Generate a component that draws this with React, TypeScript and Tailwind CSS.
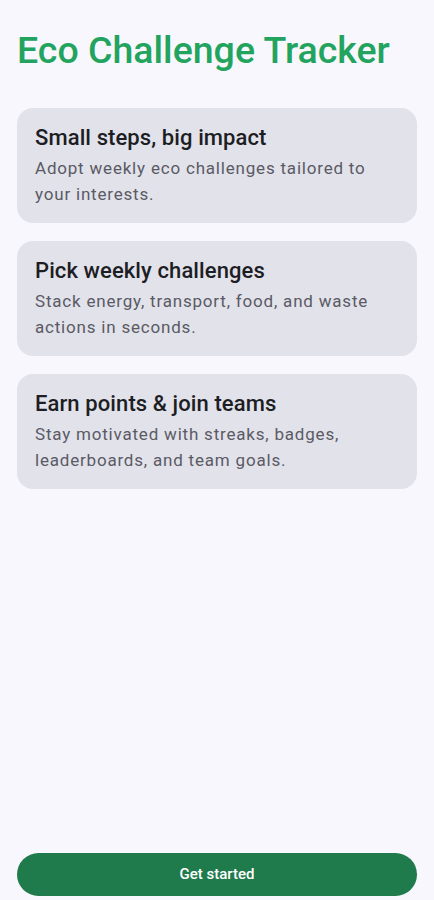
const cards = [
  {
    title: 'Small steps, big impact',
    body: 'Adopt weekly eco challenges tailored to your interests.',
  },
  {
    title: 'Pick weekly challenges',
    body: 'Stack energy, transport, food, and waste actions in seconds.',
  },
  {
    title: 'Earn points & join teams',
    body: 'Stay motivated with streaks, badges, leaderboards, and team goals.',
  },
]

export default function App() {
  return (
    <div className="flex min-h-screen flex-col bg-[#f8f7fd] px-[17px] font-['Roboto',sans-serif]">
      <h1 className="mt-[27px] text-[37.5px] leading-[46px] font-medium text-[#22a45e]">Eco Challenge Tracker</h1>
      <div className="mt-[35px] flex flex-col gap-[18px]">
        {cards.map((card) => (
          <div key={card.title} className="rounded-[16px] bg-[#e2e2eb] px-[18px] pt-[15px] pb-[16px]">
            <h2 className="text-[22px] leading-[30px] font-medium tracking-[0.1px] text-[#1d1d24]">{card.title}</h2>
            <p className="mt-[2px] text-[17px] leading-[26px] tracking-[0.8px] text-[#5a5a64]">{card.body}</p>
          </div>
        ))}
      </div>
      <div className="flex-1" />
      <button className="mb-[4px] h-[43px] w-full rounded-full bg-[#1f7a4c] text-[15px] font-medium text-white">
        Get started
      </button>
    </div>
  )
}
